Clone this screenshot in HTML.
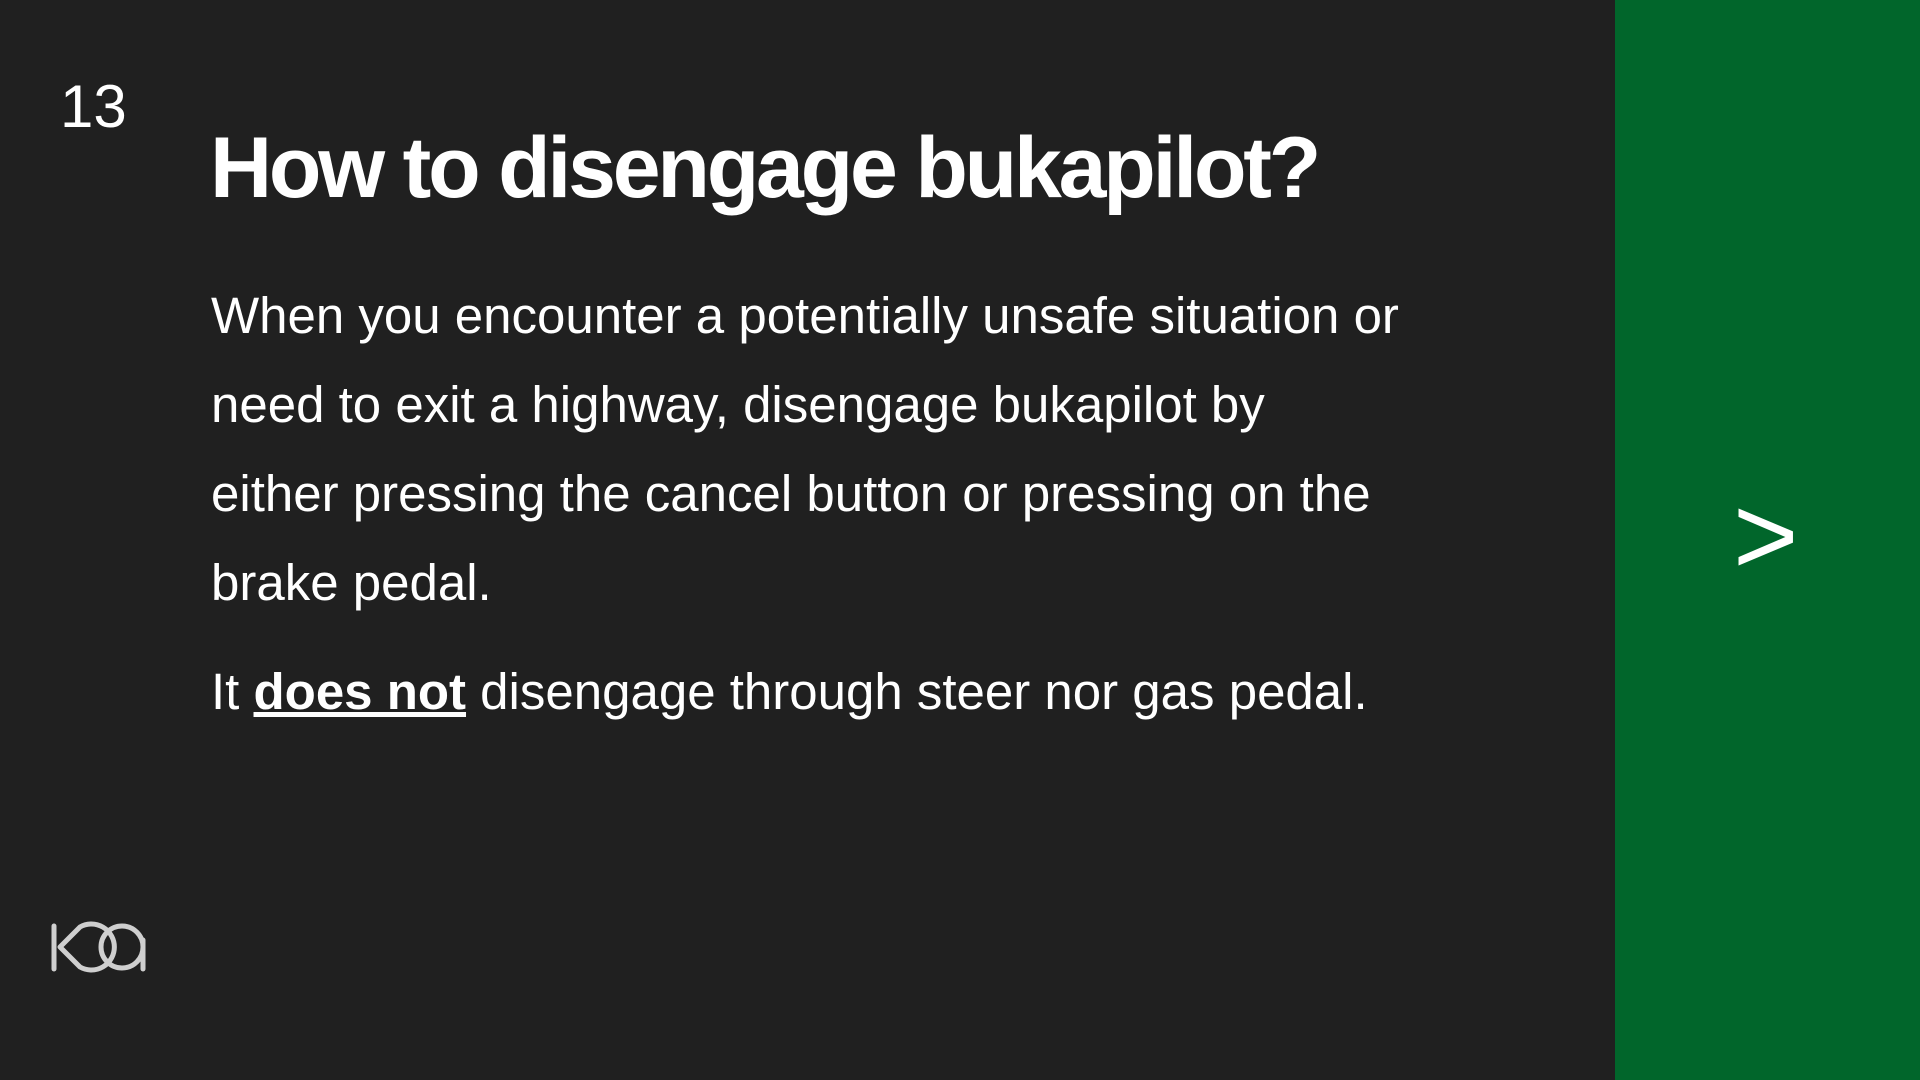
<!DOCTYPE html>
<html><head><meta charset="utf-8"><style>
html,body{margin:0;padding:0}
body{width:1920px;height:1080px;background:#202020;position:relative;overflow:hidden;font-family:"Liberation Sans",sans-serif;color:#fff}
.green{position:absolute;left:1615px;top:0;width:305px;height:1080px;background:#01662b}
.num{position:absolute;left:60px;top:72px;font-size:60px;line-height:70px}
.title{position:absolute;left:210px;top:118px;font-size:86px;font-weight:bold;letter-spacing:-3.2px;line-height:100px}
.body{position:absolute;left:211px;top:271px;font-size:51px;line-height:89px;font-weight:normal;width:1350px}
.p2{position:absolute;left:211px;top:662px;font-size:51px;line-height:60px}
.arrow{position:absolute;left:1733px;top:476px;font-size:112px;line-height:120px}
</style></head><body>
<div class="green"></div>
<div class="num">13</div>
<div class="title">How to disengage bukapilot?</div>
<div class="body">When you encounter a potentially unsafe situation or<br>need to exit a highway, disengage bukapilot by<br>either pressing the cancel button or pressing on the<br>brake pedal.</div>
<div class="p2">It <b><u>does not</u></b> disengage through steer nor gas pedal.</div>
<div class="arrow">&gt;</div>
<svg style="position:absolute;left:0;top:0" width="200" height="1000" viewBox="0 0 200 1000">
<g fill="none" stroke="#cfcfcf" stroke-width="5" stroke-linecap="round" stroke-linejoin="round">
<line x1="54" y1="926" x2="54" y2="969"/>
<path d="M80,927 L60,947 L80,967 A23 23 0 1 0 80,927"/>
<circle cx="122" cy="947" r="21"/>
<line x1="143" y1="940" x2="143" y2="969"/>
</g></svg>
</body></html>
